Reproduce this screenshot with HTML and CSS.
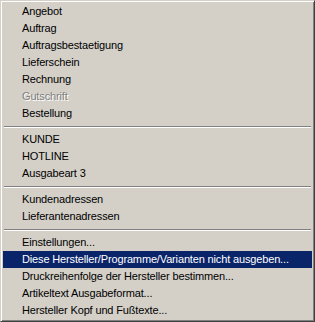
FILE: index.html
```html
<!DOCTYPE html>
<html>
<head>
<meta charset="utf-8">
<link rel="stylesheet" href="styles.css">
</head>
<body>
<div class="menu">
  <div class="item">Angebot</div>
  <div class="item">Auftrag</div>
  <div class="item">Auftragsbestaetigung</div>
  <div class="item">Lieferschein</div>
  <div class="item">Rechnung</div>
  <div class="item disabled">Gutschrift</div>
  <div class="item">Bestellung</div>
  <div class="sep"></div>
  <div class="item">KUNDE</div>
  <div class="item">HOTLINE</div>
  <div class="item">Ausgabeart 3</div>
  <div class="sep"></div>
  <div class="item">Kundenadressen</div>
  <div class="item">Lieferantenadressen</div>
  <div class="sep"></div>
  <div class="item">Einstellungen...</div>
  <div class="item active">Diese Hersteller/Programme/Varianten nicht ausgeben...</div>
  <div class="item">Druckreihenfolge der Hersteller bestimmen...</div>
  <div class="item">Artikeltext Ausgabeformat...</div>
  <div class="item">Hersteller Kopf und Fußtexte...</div>
</div>
</body>
</html>
```
FILE: styles.css
```css
html, body {
  margin: 0;
  padding: 0;
  background: #d4d0c8;
}
.menu {
  box-sizing: border-box;
  width: 315px;
  height: 322px;
  background: #d4d0c8;
  border-top: 1px solid #d4d0c8;
  border-left: 1px solid #d4d0c8;
  border-right: 1px solid #404040;
  border-bottom: 1px solid #404040;
  box-shadow: inset 1px 1px 0 #ffffff, inset -1px -1px 0 #808080;
  padding: 2px 2px 2px 2px;
  display: flex;
  flex-direction: column;
  font-family: "Liberation Sans", Arial, sans-serif;
  font-size: 11px;
  letter-spacing: -0.15px;
  color: #000000;
}
.item {
  height: 17px;
  line-height: 17px;
  padding-left: 19px;
  white-space: nowrap;
}
.item.active {
  background: #0a246a;
  color: #ffffff;
}
.item.disabled {
  color: #808080;
  text-shadow: 1px 1px 0 #ffffff;
}
.sep {
  height: 9px;
  display: flex;
  flex-direction: column;
  justify-content: center;
  padding: 0 1px;
}
.sep::before {
  content: "";
  display: block;
  height: 1px;
  background: #808080;
  border-bottom: 1px solid #ffffff;
}
```
